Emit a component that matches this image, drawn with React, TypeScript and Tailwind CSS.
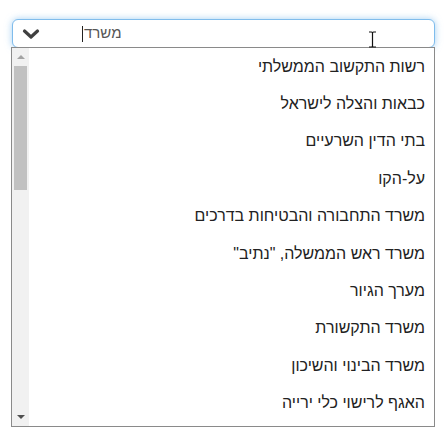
const items = [
  "רשות התקשוב הממשלתי",
  "כבאות והצלה לישראל",
  "בתי הדין השרעיים",
  "על-הקו",
  "משרד התחבורה והבטיחות בדרכים",
  'משרד ראש הממשלה, "נתיב"',
  "מערך הגיור",
  "משרד התקשורת",
  "משרד הבינוי והשיכון",
  "האגף לרישוי כלי ירייה",
];

export default function App() {
  return (
    <div
      className="relative w-[448px] h-[447px] bg-white pt-[19px]"
      style={{ fontFamily: '"Liberation Sans", Arial, sans-serif' }}
    >
      {/* combo input */}
      <div className="relative ml-[12px] w-[423px] h-[29px] rounded-[6px] border border-[#7fbcec] shadow-[0_0_7px_rgba(102,175,233,0.6)] bg-white flex items-center">
        <div className="w-[58px] pl-[9px] flex">
          <svg width="18" height="12" viewBox="0 0 18 12" className="mt-[1px]">
            <path d="M2.5 3 L9 9 L15.5 3" fill="none" stroke="#404040" strokeWidth="3.2" strokeLinecap="round" strokeLinejoin="round" />
          </svg>
        </div>
        <div className="flex items-center pl-[11px] text-[15px] text-[#555]">
          <span className="w-px h-[16px] bg-[#222] mr-[1px]" />
          <span dir="rtl">משרד</span>
        </div>
      </div>

      {/* dropdown list */}
      <div className="relative ml-[11px] -mt-[1px] w-[424px] h-[380px] border border-[#8a8a8a] bg-white flex">
        {/* scrollbar */}
        <div className="w-[17px] bg-[#f1f1f1] flex flex-col items-center">
          <div className="h-[17px] flex items-center justify-center">
            <svg width="8" height="5" viewBox="0 0 8 5"><path d="M0 5 L4 1 L8 5 Z" fill="#a3a3a3" /></svg>
          </div>
          <div className="w-[13px] h-[124px] bg-[#c1c1c1] mt-[1px]" />
          <div className="flex-1" />
          <div className="h-[17px] flex items-center justify-center">
            <svg width="8" height="5" viewBox="0 0 8 5"><path d="M0 0 L8 0 L4 4 Z" fill="#505050" /></svg>
          </div>
        </div>
        <ul dir="rtl" className="flex-1">
          {items.map((t) => (
            <li key={t} className="h-[37.4px] flex items-center pr-[9px] text-[16px] text-[#222]">
              {t}
            </li>
          ))}
        </ul>
      </div>

      {/* mouse I-beam cursor */}
      <svg width="9" height="17" viewBox="0 0 9 17" className="absolute left-[368px] top-[31px]">
        <path d="M1 1 H3.5 Q4.5 1 4.5 2 V15 Q4.5 16 3.5 16 H1 M8 1 H5.5 Q4.5 1 4.5 2 M8 16 H5.5 Q4.5 16 4.5 15" fill="none" stroke="#111" strokeWidth="1.2" />
      </svg>
    </div>
  );
}
